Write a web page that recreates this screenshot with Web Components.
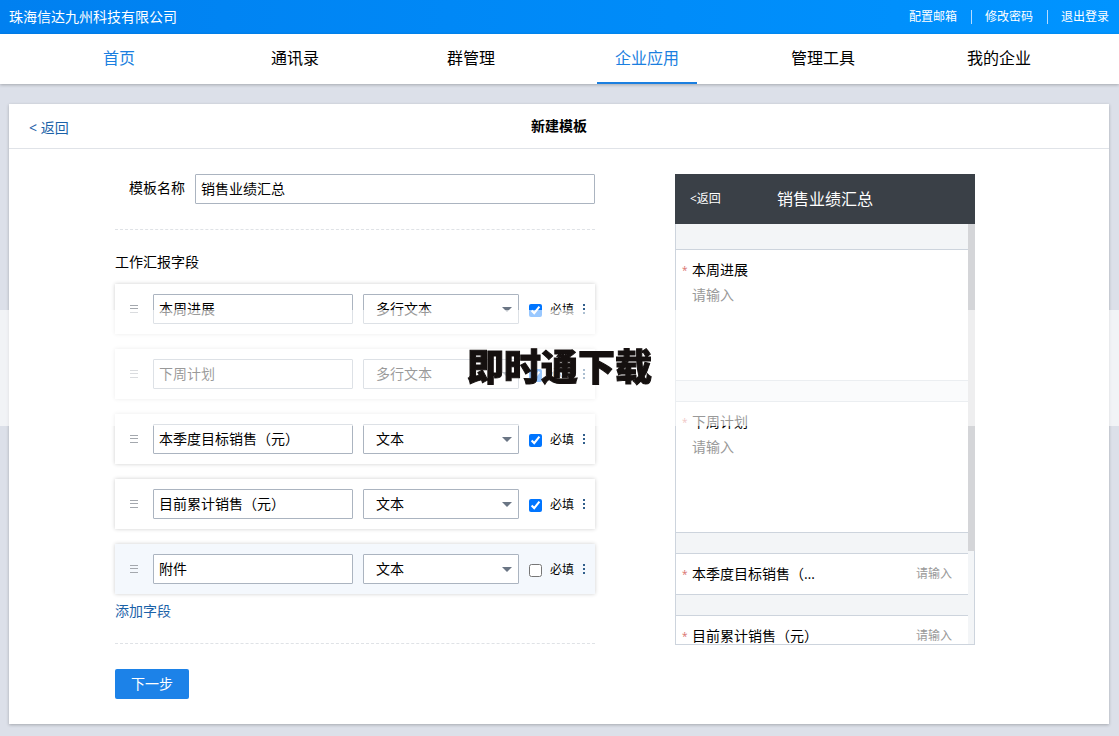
<!DOCTYPE html>
<html lang="zh-CN">
<head>
<meta charset="UTF-8">
<meta name="viewport" content="width=device-width, initial-scale=1">
<title>新建模板</title>
<style>
    body {
        margin: 0;
        background: #dce0e9;
        color: #000;
        font: 14px/20px "Open Sans", "Noto Sans CJK SC", sans-serif;
        --azul: #1b7fe0;
        --enlace: #1b62a8;
        --borde: #abb4c0;
    }
</style>
</head>
<body>
<barra-superior empresa="珠海信达九州科技有限公司">
    <a href="#mail">配置邮箱</a>
    <a href="#password">修改密码</a>
    <a href="#logout">退出登录</a>
</barra-superior>

<menu-principal>
    <menu-enlace destino="#home" color="azul">首页</menu-enlace>
    <menu-enlace destino="#contacts">通讯录</menu-enlace>
    <menu-enlace destino="#groups">群管理</menu-enlace>
    <menu-enlace destino="#apps" color="azul" activo>企业应用</menu-enlace>
    <menu-enlace destino="#tools">管理工具</menu-enlace>
    <menu-enlace destino="#company">我的企业</menu-enlace>
</menu-principal>

<panel-pagina titulo="新建模板">
    <formulario-plantilla nombre="销售业绩汇总">
        <campo-plantilla nombre="本周进展" tipo="多行文本" obligatorio></campo-plantilla>
        <campo-plantilla nombre="下周计划" tipo="多行文本" obligatorio></campo-plantilla>
        <campo-plantilla nombre="本季度目标销售（元）" tipo="文本" obligatorio></campo-plantilla>
        <campo-plantilla nombre="目前累计销售（元）" tipo="文本" obligatorio></campo-plantilla>
        <campo-plantilla nombre="附件" tipo="文本" resaltado></campo-plantilla>
    </formulario-plantilla>
    <vista-previa titulo="销售业绩汇总">
        <campo-previa nombre="本周进展" multilinea></campo-previa>
        <campo-previa nombre="下周计划" multilinea></campo-previa>
        <campo-previa nombre="本季度目标销售（元）"></campo-previa>
        <campo-previa nombre="目前累计销售（元）"></campo-previa>
    </vista-previa>
</panel-pagina>

<banda-aviso>即时通下载</banda-aviso>

<script>
class BarraSuperior extends HTMLElement {
    constructor() {
        super();
        this.attachShadow({ mode: 'open' });
    }

    connectedCallback() {
        this.shadowRoot.innerHTML = `
            <style>
                :host {
                    display: flex;
                    justify-content: space-between;
                    align-items: center;
                    height: 34px;
                    padding: 0 10px 0 9px;
                    background: linear-gradient(90deg, #0080f0, #0094ff);
                    color: #fff;
                }
                nav {
                    display: flex;
                    font-size: 12px;
                    line-height: 14px;
                }
                ::slotted(a) {
                    color: #fff;
                    text-decoration: none;
                }
                ::slotted(a:not(:last-child)) {
                    border-right: 1px solid #b5dcff;
                    margin-right: 13px;
                    padding-right: 14px;
                }
            </style>
            <span>${this.getAttribute('empresa')}</span>
            <nav><slot></slot></nav>
        `;
    }
}

class MenuPrincipal extends HTMLElement {
    constructor() {
        super();
        this.attachShadow({ mode: 'open' });
        this.shadowRoot.innerHTML = `
            <style>
                :host {
                    display: block;
                    background: #fff;
                    box-shadow: 0 1px 3px rgba(0, 0, 0, .25);
                }
                nav {
                    display: grid;
                    grid-template-columns: repeat(6, 1fr);
                    padding: 0 32px 0 31px;
                }
            </style>
            <nav><slot></slot></nav>
        `;
    }
}

class MenuEnlace extends HTMLElement {
    constructor() {
        super();
        this.attachShadow({ mode: 'open' });
    }

    connectedCallback() {
        this.shadowRoot.innerHTML = `
            <style>
                :host {
                    display: flex;
                    justify-content: center;
                }
                a {
                    box-sizing: border-box;
                    width: 100px;
                    height: 50px;
                    border-bottom: 2px solid transparent;
                    color: #000;
                    font-size: 16px;
                    line-height: 48px;
                    text-align: center;
                    text-decoration: none;
                }
                :host([color="azul"]) a {
                    color: var(--azul);
                }
                :host([activo]) a {
                    border-color: var(--azul);
                }
            </style>
            <a href="${this.getAttribute('destino')}"><slot></slot></a>
        `;
    }
}

class PanelPagina extends HTMLElement {
    constructor() {
        super();
        this.attachShadow({ mode: 'open' });
    }

    connectedCallback() {
        this.shadowRoot.innerHTML = `
            <style>
                :host {
                    display: block;
                    margin: 20px 10px 12px 9px;
                    background: #fff;
                    box-shadow: 0 1px 3px rgba(0, 0, 0, .25);
                }
                header {
                    display: grid;
                    grid-template-columns: 1fr auto 1fr;
                    align-items: center;
                    height: 44px;
                    padding: 0 20px;
                    border-bottom: 1px solid #e0e3e8;
                }
                a {
                    color: var(--enlace);
                    padding-top: 4px;
                    text-decoration: none;
                }
                h1 {
                    margin: 0;
                    font-size: 14px;
                    line-height: 20px;
                }
                .contenido {
                    display: grid;
                    grid-template-columns: 1fr 300px;
                    gap: 80px;
                    align-items: start;
                    padding: 25px 134px 25px 106px;
                }
            </style>
            <header>
                <a href="#back">&lt; 返回</a>
                <h1>${this.getAttribute('titulo')}</h1>
            </header>
            <div class="contenido"><slot></slot></div>
        `;
    }
}

class FormularioPlantilla extends HTMLElement {
    constructor() {
        super();
        this.attachShadow({ mode: 'open' });
    }

    connectedCallback() {
        this.shadowRoot.innerHTML = `
            <style>
                :host {
                    display: block;
                }
                .nombre {
                    display: grid;
                    grid-template-columns: 70px 1fr;
                    gap: 10px;
                    padding-bottom: 25px;
                    border-bottom: 1px dashed #dfe2e6;
                }
                label {
                    line-height: 28px;
                    text-align: right;
                }
                input {
                    box-sizing: border-box;
                    width: 100%;
                    height: 30px;
                    padding: 0 5px 2px;
                    border: 1px solid var(--borde);
                    border-radius: 1px;
                    font: inherit;
                }
                h2 {
                    margin: 22px 0 12px;
                    font-size: 14px;
                    line-height: 20px;
                    font-weight: normal;
                }
                .campos {
                    display: grid;
                    gap: 15px;
                }
                .agregar {
                    padding: 7px 0 22px;
                    border-bottom: 1px dashed #dfe2e6;
                }
                a {
                    color: var(--enlace);
                    text-decoration: none;
                }
                button {
                    height: 30px;
                    margin-top: 25px;
                    padding: 0 16px;
                    border: 0;
                    border-radius: 2px;
                    background: #1c82e8;
                    color: #fff;
                    font: inherit;
                }
            </style>
            <div class="nombre">
                <label for="nombre">模板名称</label>
                <input id="nombre" type="text" value="${this.getAttribute('nombre')}">
            </div>
            <h2>工作汇报字段</h2>
            <div class="campos"><slot></slot></div>
            <div class="agregar"><a href="#add">添加字段</a></div>
            <button type="button">下一步</button>
        `;
    }
}

class CampoPlantilla extends HTMLElement {
    constructor() {
        super();
        this.attachShadow({ mode: 'open' });
    }

    connectedCallback() {
        const tipo = this.getAttribute('tipo');
        const opciones = ['文本', '多行文本'];

        this.shadowRoot.innerHTML = `
            <style>
                :host {
                    display: grid;
                    grid-template-columns: 8px 1fr 156px 66px;
                    align-items: center;
                    gap: 10px;
                    height: 50px;
                    padding-left: 15px;
                    background: #fff;
                    box-shadow: 0 0 4px rgba(0, 0, 0, .2);
                }
                :host([resaltado]) {
                    background: #f4f8fd;
                }
                .asa {
                    width: 9px;
                    height: 9px;
                }
                .texto, select {
                    box-sizing: border-box;
                    width: 100%;
                    height: 30px;
                    border: 1px solid var(--borde);
                    border-radius: 1px;
                    background: #fff;
                    color: #000;
                    font: inherit;
                }
                .texto {
                    padding: 0 5px 2px;
                }
                .nombre {
                    padding-left: 5px;
                }
                .tipo {
                    display: grid;
                    align-items: center;
                }
                select {
                    grid-area: 1 / 1;
                    padding: 0 24px 0 12px;
                    appearance: none;
                }
                .flecha {
                    grid-area: 1 / 1;
                    justify-self: end;
                    margin-right: 7px;
                    width: 10px;
                    height: 5px;
                    pointer-events: none;
                }
                .opciones {
                    display: flex;
                    align-items: center;
                    font-size: 12px;
                }
                .opciones input {
                    width: 13px;
                    height: 13px;
                    margin: 3px 8px 0 0;
                }
                label {
                    padding-top: 2px;
                }
                button {
                    display: flex;
                    margin-left: 8px;
                    padding: 0;
                    border: 0;
                    background: none;
                }
            </style>
            <svg class="asa" viewBox="0 0 9 9" aria-hidden="true">
                <path d="M0 .5h8M0 3.5h8M0 7.5h8" stroke="#a4a8ae"/>
            </svg>
            <div class="nombre">
                <input class="texto" type="text" aria-label="字段名称" value="${this.getAttribute('nombre')}">
            </div>
            <div class="tipo">
                <select aria-label="字段类型">
                    ${opciones.map(o => `<option${o === tipo ? ' selected' : ''}>${o}</option>`).join('')}
                </select>
                <svg class="flecha" viewBox="0 0 10 5" aria-hidden="true"><path d="M0 0h10L5 5z" fill="#6a7584"/></svg>
            </div>
            <div class="opciones">
                <input id="obligatorio" type="checkbox"${this.hasAttribute('obligatorio') ? ' checked' : ''}>
                <label for="obligatorio">必填</label>
                <button type="button" aria-label="更多">
                    <svg width="4" height="12" viewBox="0 0 4 12"><path d="M1 1h2v2H1zM1 5h2v2H1zM1 9h2v2H1z" fill="#315f8c"/></svg>
                </button>
            </div>
        `;
    }
}

class VistaPrevia extends HTMLElement {
    constructor() {
        super();
        this.attachShadow({ mode: 'open' });
    }

    connectedCallback() {
        this.shadowRoot.innerHTML = `
            <style>
                :host {
                    display: block;
                }
                header {
                    display: grid;
                    grid-template-columns: 1fr auto 1fr;
                    align-items: center;
                    height: 50px;
                    padding: 0 15px;
                    background: #3a4047;
                    color: #fff;
                }
                a {
                    color: #fff;
                    font-size: 12px;
                    text-decoration: none;
                }
                h2 {
                    margin: 0;
                    font-size: 16px;
                    font-weight: normal;
                }
                .pantalla {
                    display: flex;
                    height: 420px;
                    overflow: hidden;
                    border: solid #cdd4dd;
                    border-width: 0 0 1px 1px;
                    background: #f3f5f7;
                }
                .lista {
                    display: flex;
                    flex: 1;
                    flex-direction: column;
                    gap: 20px;
                    min-width: 0;
                    padding-top: 25px;
                }
                .barra {
                    box-sizing: border-box;
                    flex: none;
                    width: 7px;
                    border-right: 1px solid #cdd4dd;
                }
                .pulgar {
                    width: 7px;
                    height: 327px;
                    background: #d4d5d8;
                }
            </style>
            <header>
                <a href="#preview-back">&lt;返回</a>
                <h2>${this.getAttribute('titulo')}</h2>
            </header>
            <div class="pantalla">
                <div class="lista"><slot></slot></div>
                <div class="barra"><div class="pulgar"></div></div>
            </div>
        `;
    }
}

class CampoPrevia extends HTMLElement {
    constructor() {
        super();
        this.attachShadow({ mode: 'open' });
    }

    connectedCallback() {
        const control = this.hasAttribute('multilinea')
            ? '<textarea id="valor" placeholder="请输入"></textarea>'
            : '<input id="valor" type="text" placeholder="请输入">';

        this.shadowRoot.innerHTML = `
            <style>
                :host {
                    box-sizing: border-box;
                    display: flex;
                    flex: none;
                    align-items: center;
                    height: 42px;
                    padding: 0 16px 0 6px;
                    border: solid #cdd4dd;
                    border-width: 1px 0;
                    background: #fff;
                }
                :host([multilinea]) {
                    display: block;
                    height: 132px;
                    padding-top: 10px;
                }
                label {
                    display: flex;
                    gap: 5px;
                }
                .marca {
                    width: 5px;
                    color: #d9706c;
                    font-size: 10px;
                }
                .nombre {
                    max-width: 128px;
                    overflow: hidden;
                    text-overflow: ellipsis;
                    white-space: nowrap;
                }
                input, textarea {
                    flex: 1;
                    min-width: 0;
                    padding: 0;
                    border: 0;
                    background: none;
                    font: inherit;
                }
                input {
                    font-size: 12px;
                    text-align: right;
                }
                textarea {
                    display: block;
                    box-sizing: border-box;
                    width: 100%;
                    height: 90px;
                    padding: 5px 10px;
                    resize: none;
                }
                ::placeholder {
                    color: #999;
                }
            </style>
            <label for="valor">
                <span class="marca">*</span>
                <span class="nombre">${this.getAttribute('nombre')}</span>
            </label>
            ${control}
        `;
    }
}

// Banda translúcida centrada sobre toda la página
class BandaAviso extends HTMLElement {
    constructor() {
        super();
        this.attachShadow({ mode: 'open' });
        this.shadowRoot.innerHTML = `
            <style>
                :host {
                    position: fixed;
                    inset: 0;
                    display: flex;
                    align-items: center;
                    pointer-events: none;
                }
                p {
                    flex: 1;
                    margin: 0;
                    padding: 27px 0 33px;
                    background: rgba(255, 255, 255, .6);
                    color: #15100f;
                    font: 900 37px/56px "Noto Sans CJK SC", sans-serif;
                    -webkit-text-stroke: 1px #15100f;
                    text-align: center;
                }
            </style>
            <p><slot></slot></p>
        `;
    }
}

customElements.define('barra-superior', BarraSuperior);
customElements.define('menu-principal', MenuPrincipal);
customElements.define('menu-enlace', MenuEnlace);
customElements.define('panel-pagina', PanelPagina);
customElements.define('formulario-plantilla', FormularioPlantilla);
customElements.define('campo-plantilla', CampoPlantilla);
customElements.define('vista-previa', VistaPrevia);
customElements.define('campo-previa', CampoPrevia);
customElements.define('banda-aviso', BandaAviso);
</script>
</body>
</html>
